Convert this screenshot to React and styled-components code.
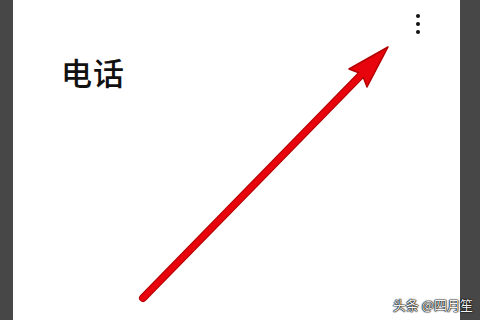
import React from 'react'
import styled, { createGlobalStyle } from 'styled-components'

const Global = createGlobalStyle`
  html, body {
    margin: 0;
    padding: 0;
    background: #474747;
  }
  body {
    font-family: "Noto Sans CJK SC", "Noto Sans", sans-serif;
  }
`

const Frame = styled.div`
  width: 480px;
  height: 320px;
  display: flex;
  background: #474747;
  overflow: hidden;
`

const Screen = styled.div`
  position: relative;
  margin-left: 13px;
  width: 447px;
  height: 320px;
  background: #fff;
`

const TopBar = styled.div`
  display: flex;
  justify-content: flex-end;
  padding: 14px 40px 0 0;
`

const MenuButton = styled.div`
  display: flex;
  flex-direction: column;
  align-items: center;
  gap: 4px;
`

const Dot = styled.span`
  width: 4px;
  height: 4px;
  border-radius: 50%;
  background: #111;
`

const Title = styled.h1`
  margin: 20px 0 0 48px;
  font-size: 31px;
  line-height: 36px;
  font-weight: 500;
  color: #111;
  letter-spacing: 1px;
`

const ArrowLayer = styled.svg`
  position: absolute;
  left: -13px;
  top: 0;
  pointer-events: none;
`

const Watermark = styled.div`
  position: absolute;
  right: -13px;
  bottom: 7px;
  font-size: 13px;
  line-height: 16px;
  color: #f4f4f4;
  text-shadow: 0 0 1px #000, 0 0 1px #000, 0 0 1px #000, 0 0 2px #222;
  white-space: nowrap;
`

const Arrow = () => (
  <ArrowLayer width="480" height="320" viewBox="0 0 480 320">
    <line x1="143" y1="298" x2="362" y2="74" stroke="#b30000" strokeWidth="8" strokeLinecap="round" />
    <polygon points="388,47 349,69 362,74 367,87" fill="#e8040c" stroke="#b30000" strokeWidth="1.5" strokeLinejoin="round" />
    <line x1="143" y1="298" x2="364" y2="72" stroke="#e8040c" strokeWidth="6" strokeLinecap="round" />
  </ArrowLayer>
)

export default function App() {
  return (
    <>
      <Global />
      <Frame>
        <Screen>
          <TopBar>
            <MenuButton>
              <Dot />
              <Dot />
              <Dot />
            </MenuButton>
          </TopBar>
          <Title>电话</Title>
          <Arrow />
          <Watermark>头条 @四月笙</Watermark>
        </Screen>
      </Frame>
    </>
  )
}
